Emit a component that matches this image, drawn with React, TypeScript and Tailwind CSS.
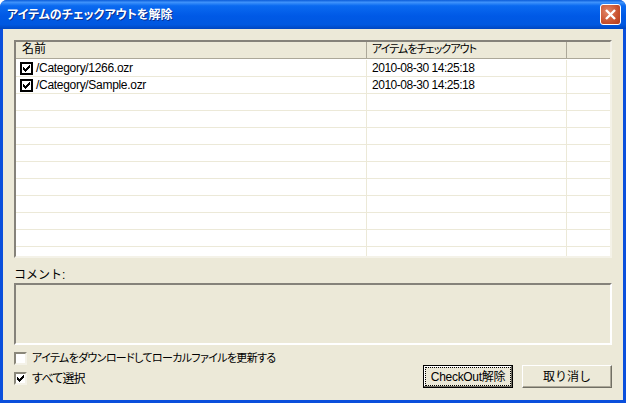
const FONT = '"Liberation Sans", "Noto Sans CJK JP", sans-serif';

const ROWS = [
  { name: '/Category/1266.ozr', date: '2010-08-30 14:25:18' },
  { name: '/Category/Sample.ozr', date: '2010-08-30 14:25:18' },
  ...Array.from({ length: 10 }, () => ({ name: '', date: '' })),
];

function Check({ thick, checked }: { thick?: boolean; checked?: boolean }) {
  return (
    <div
      className={
        thick
          ? 'w-[13px] h-[13px] shrink-0 bg-white border-2 border-black'
          : 'w-[13px] h-[13px] shrink-0 bg-white border-2 border-t-[#8a877a] border-l-[#8a877a] border-r-[#f4f2e8] border-b-[#f4f2e8]'
      }
    >
      {checked && (
        <svg viewBox="0 0 9 9" className="w-[9px] h-[9px] block" shapeRendering="crispEdges">
          <path d="M1 3 L2 3 L2 4 L3 4 L3 5 L4 5 L4 4 L5 4 L5 3 L6 3 L6 2 L7 2 L7 1 L8 1 L8 4 L7 4 L7 5 L6 5 L6 6 L5 6 L5 7 L4 7 L4 8 L3 8 L3 7 L2 7 L2 6 L1 6 Z" fill="#000" />
        </svg>
      )}
    </div>
  );
}

function Button({ label, focused }: { label: string; focused?: boolean }) {
  if (focused) {
    return (
      <div className="w-[90px] h-[23px] border border-black bg-[#ece9d8] p-[1px] shadow-[inset_-1px_-1px_0_#716f64,inset_1px_1px_0_#fff]">
        <div className="h-full border border-dotted border-black flex items-center justify-center text-[12px] text-black tracking-[-0.3px]">
          {label}
        </div>
      </div>
    );
  }
  return (
    <div className="w-[90px] h-[23px] bg-[#ece9d8] flex items-center justify-center text-[12px] text-black border-t border-l border-white border-r border-b border-r-[#716f64] border-b-[#716f64] shadow-[inset_-1px_-1px_0_#aca899]">
      {label}
    </div>
  );
}

export default function App() {
  return (
    <div
      className="w-[626px] h-[403px] overflow-hidden flex flex-col rounded-t-[7px] bg-[#0a4fdc]"
      style={{ fontFamily: FONT }}
    >
      {/* Title bar */}
      <div className="h-[29px] shrink-0 flex items-center pl-[7px] pr-[5px] bg-[linear-gradient(180deg,#0a5bd8_0%,#3f93fb_8%,#0a6af0_20%,#0059e6_55%,#0058e0_85%,#0046c0_100%)]">
        <span className="text-[12px] font-bold text-white [text-shadow:1px_1px_0_#0a2f90] [font-feature-settings:'palt']">
          アイテムのチェックアウトを解除
        </span>
        <div className="flex-1"></div>
        <div className="w-[21px] h-[21px] rounded-[3px] border border-white bg-[radial-gradient(circle_at_35%_35%,#e2876a_0%,#c9522f_60%,#b23a1b_100%)] flex items-center justify-center">
          <svg viewBox="0 0 13 13" className="w-[13px] h-[13px]">
            <path d="M2 2 L11 11 M11 2 L2 11" stroke="#fff" strokeWidth="2.4" />
          </svg>
        </div>
      </div>

      {/* Dialog body */}
      <div className="flex-1 mx-[3px] mb-[3px] bg-[#ece9d8] px-[11px] pt-[11px] flex flex-col text-black min-h-0">
        {/* List */}
        <div className="h-[218px] w-[598px] shrink-0 bg-white border-2 border-t-[#85827a] border-l-[#85827a] border-r-[#f4f2e8] border-b-[#f4f2e8] overflow-hidden">
          <div className="h-[17px] mb-[1px] flex bg-[#ece9d8] border-b border-b-[#aca899] text-[12px] leading-[15px]">
            <div className="w-[351px] pl-[6px] border-r border-r-[#aca899]">名前</div>
            <div className="w-[200px] pl-[5px] border-r border-r-[#aca899] text-[11px] tracking-[-0.95px] [font-feature-settings:'palt']">アイテムをチェックアウト</div>
            <div className="flex-1"></div>
          </div>
          {ROWS.map((row, i) => (
            <div key={i} className="h-[17px] flex shadow-[inset_0_-1px_0_#ece9d8] text-[12px]">
              <div className="w-[351px] pl-[4px] flex items-center gap-[3px] border-r border-r-[#ece9d8] tracking-[-0.3px]">
                {row.name && <Check thick checked />}
                <span className="pb-[2px]">{row.name}</span>
              </div>
              <div className="w-[200px] pl-[5px] pb-[2px] flex items-center border-r border-r-[#ece9d8] tracking-[-0.47px]">{row.date}</div>
              <div className="flex-1"></div>
            </div>
          ))}
        </div>

        {/* Comment */}
        <div className="h-[17px] mt-[8px] text-[12px] leading-[19px]">コメント:</div>
        <div className="h-[62px] w-[598px] shrink-0 border-2 border-t-[#85827a] border-l-[#85827a] border-r-white border-b-white"></div>

        {/* Footer */}
        <div className="flex justify-between mt-[7px] text-[12px]">
          <div className="flex flex-col gap-[7px]">
            <div className="flex items-center gap-[5px] h-[13px]">
              <Check />
              <span className="text-[11px] tracking-[-0.65px] [font-feature-settings:'palt']">アイテムをダウンロードしてローカルファイルを更新する</span>
            </div>
            <div className="flex items-center gap-[5px] h-[13px]">
              <Check checked />
              <span className="tracking-[-0.8px] [font-feature-settings:'palt']">すべて選択</span>
            </div>
          </div>
          <div className="flex items-end gap-[9px] h-[36px]">
            <Button label="CheckOut解除" focused />
            <Button label="取り消し" />
          </div>
        </div>
      </div>
    </div>
  );
}
